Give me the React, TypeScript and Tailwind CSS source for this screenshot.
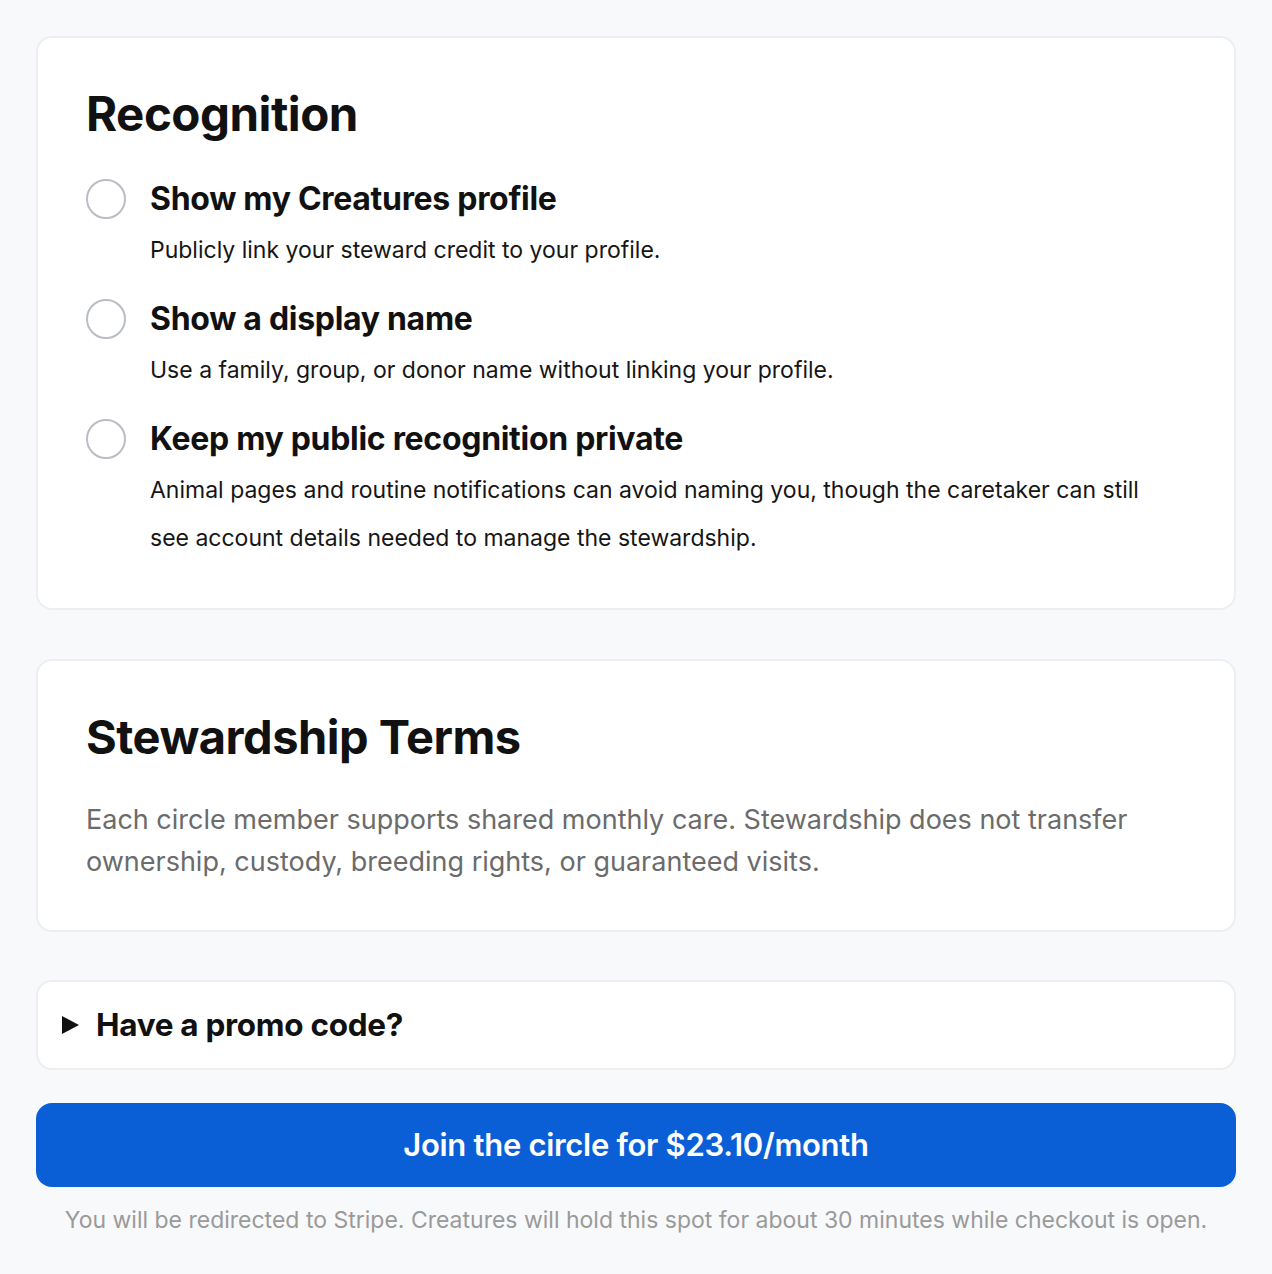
import React from 'react';

interface Option {
  id: string;
  label: string;
  description: string;
}

const options: Option[] = [
  {
    id: 'profile',
    label: 'Show my Creatures profile',
    description: 'Publicly link your steward credit to your profile.',
  },
  {
    id: 'display',
    label: 'Show a display name',
    description: 'Use a family, group, or donor name without linking your profile.',
  },
  {
    id: 'private',
    label: 'Keep my public recognition private',
    description:
      'Animal pages and routine notifications can avoid naming you, though the caretaker can still see account details needed to manage the stewardship.',
  },
];

export default function App() {
  const [selected, setSelected] = React.useState<string | null>(null);
  const [open, setOpen] = React.useState(false);

  return (
    <div className="min-h-[1274px] bg-[#f8f9fb] px-9 pt-9 pb-8 font-['Inter',sans-serif] text-[#111111]">
      {/* Recognition */}
      <section className="rounded-2xl border-2 border-[#eceef1] bg-white pr-[60px] pl-12 pt-12 pb-[46px]">
        <h2 className="text-[47.5px] font-bold leading-[56px] tracking-[-0.5px]">Recognition</h2>
        <div className="mt-[37px] flex flex-col gap-[25px]">
          {options.map((option) => {
            const isSelected = selected === option.id;
            return (
              <label
                key={option.id}
                className="flex cursor-pointer items-start gap-6"
                onClick={() => setSelected(option.id)}
              >
                <span
                  className={`flex h-10 w-10 shrink-0 items-center justify-center rounded-full border-2 ${
                    isSelected ? 'border-[#0b5fd6]' : 'border-[#b9bec4]'
                  }`}
                >
                  {isSelected && <span className="h-5 w-5 rounded-full bg-[#0b5fd6]" />}
                </span>
                <div className="min-w-0 flex-1">
                  <div className="text-[32px] font-bold leading-10 tracking-[-0.3px]">
                    {option.label}
                  </div>
                  <p className="mt-[7px] text-[23px] leading-[48px] text-[#161616]">
                    {option.description}
                  </p>
                </div>
              </label>
            );
          })}
        </div>
      </section>

      {/* Stewardship Terms */}
      <section className="mt-[49px] rounded-2xl border-2 border-[#eceef1] bg-white px-12 pt-12 pb-[47px]">
        <h2 className="text-[47px] font-bold leading-[56px] tracking-[-0.5px]">Stewardship Terms</h2>
        <p className="mt-[34px] text-[27px] leading-[42px] text-[#6b6b6b]">
          Each circle member supports shared monthly care. Stewardship does not transfer ownership,
          custody, breeding rights, or guaranteed visits.
        </p>
      </section>

      {/* Promo */}
      <section className="mt-[48px] rounded-2xl border-2 border-[#eceef1] bg-white px-6">
        <button
          className="flex h-[86px] w-full items-center gap-[17px] text-left"
          onClick={() => setOpen(!open)}
        >
          <svg width="17" height="18" viewBox="0 0 17 18" className={open ? 'rotate-90' : ''}>
            <path d="M0 0 L17 9 L0 18 Z" fill="#111111" />
          </svg>
          <span className="text-[31.5px] font-bold tracking-[-0.3px]">Have a promo code?</span>
        </button>
      </section>

      {/* CTA */}
      <button className="mt-[33px] flex h-[84px] w-full items-center justify-center rounded-2xl bg-[#0b5fd6] text-[31px] font-semibold tracking-[-0.3px] text-white">
        Join the circle for $23.10/month
      </button>
      <p className="mt-[17px] text-center text-[23px] leading-8 text-[#9a9a9a]">
        You will be redirected to Stripe. Creatures will hold this spot for about 30 minutes while
        checkout is open.
      </p>
    </div>
  );
}
